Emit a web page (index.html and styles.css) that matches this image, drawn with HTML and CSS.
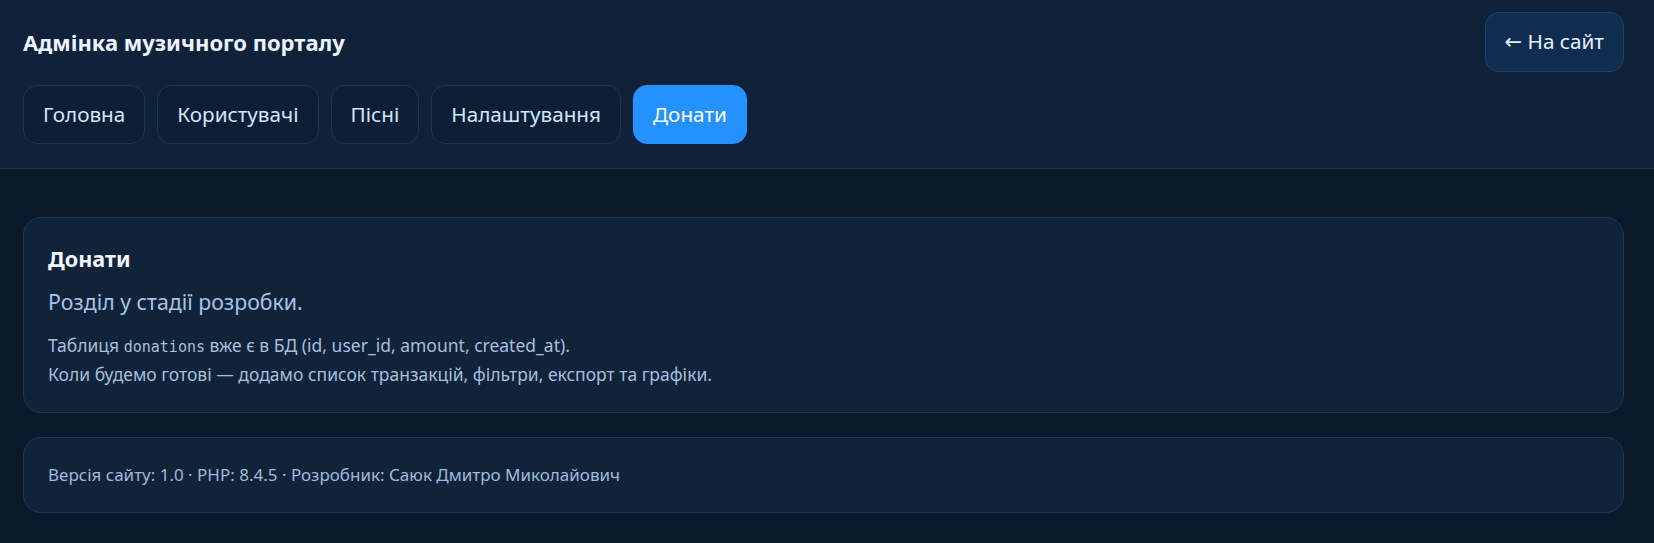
FILE: index.html
```html
<!DOCTYPE html>
<html lang="uk">
<head>
<meta charset="utf-8">
<title>Адмінка музичного порталу — Донати</title>
<link rel="stylesheet" href="styles.css">
</head>
<body>
<header class="header">
  <div class="header-top">
    <div class="title">Адмінка музичного порталу</div>
    <a class="back" href="#"><span class="arrow">←</span> На сайт</a>
  </div>
  <nav class="tabs">
    <a class="tab" href="#">Головна</a>
    <a class="tab" href="#">Користувачі</a>
    <a class="tab" href="#">Пісні</a>
    <a class="tab" href="#">Налаштування</a>
    <a class="tab tab-active" href="#">Донати</a>
  </nav>
</header>
<main class="main">
  <section class="card card-main">
    <h2 class="card-title">Донати</h2>
    <p class="lead">Розділ у стадії розробки.</p>
    <p class="note">Таблиця <code class="code">donations</code> вже є в БД (id, user_id, amount, created_at).<br>Коли будемо готові — додамо список транзакцій, фільтри, експорт та графіки.</p>
  </section>
  <section class="card card-footer">
    <div class="footer-text">Версія сайту: 1.0 · PHP: 8.4.5 · Розробник: Саюк Дмитро Миколайович</div>
  </section>
</main>
</body>
</html>
```
FILE: styles.css
```css
* { box-sizing: border-box; }
html, body { margin: 0; }
body {
  background: #0b1a2b;
  color: #e6eefb;
  font-family: "Noto Sans", "Open Sans", sans-serif;
  min-height: 543px;
}
a { text-decoration: none; }

.header {
  background: #10223a;
  border-bottom: 1px solid #1b3452;
  padding: 12px 30px 24px 23px;
}
.header-top {
  display: flex;
  justify-content: space-between;
  align-items: center;
}
.title {
  font-size: 22px;
  font-weight: 700;
  color: #eef4ff;
}
.back {
  display: block;
  padding: 14px 19px;
  line-height: 29px;
  font-size: 20.7px;
  color: #e8f1ff;
  background: #0f2e4f;
  border: 1px solid #1f4167;
  border-radius: 14px;
}
.arrow {
  font-family: "DejaVu Sans", sans-serif;
  font-size: 21px;
}
.tabs {
  display: flex;
  gap: 12px;
  margin-top: 13px;
}
.tab {
  display: block;
  padding: 14px 19px;
  line-height: 29px;
  font-size: 20.7px;
  color: #d5e5fb;
  background: #0e1f35;
  border: 1px solid #1d3553;
  border-radius: 14px;
}
.tab-active {
  background: #2392ff;
  border-color: #2392ff;
  color: #ffffff;
}

.main {
  padding: 48px 30px 30px 23px;
  display: flex;
  flex-direction: column;
  gap: 24px;
}
.card {
  background: #112339;
  border: 1px solid #1d3859;
  border-radius: 18px;
  padding: 24px;
}
.card-main {
  padding-top: 26px;
}
.card-title {
  margin: 0 0 13px;
  font-size: 21.6px;
  line-height: 30px;
  font-weight: 700;
  color: #f3f7ff;
}
.lead {
  margin: 0 0 15px;
  font-size: 21.3px;
  line-height: 30px;
  color: #a9c4e7;
}
.note {
  margin: 0;
  font-size: 17.5px;
  line-height: 27px;
  color: #a6bfdf;
}
.code {
  font-family: "DejaVu Sans Mono", "Liberation Mono", monospace;
  font-size: 15px;
}
.footer-text {
  font-size: 17px;
  line-height: 26px;
  color: #a0badc;
}
```
